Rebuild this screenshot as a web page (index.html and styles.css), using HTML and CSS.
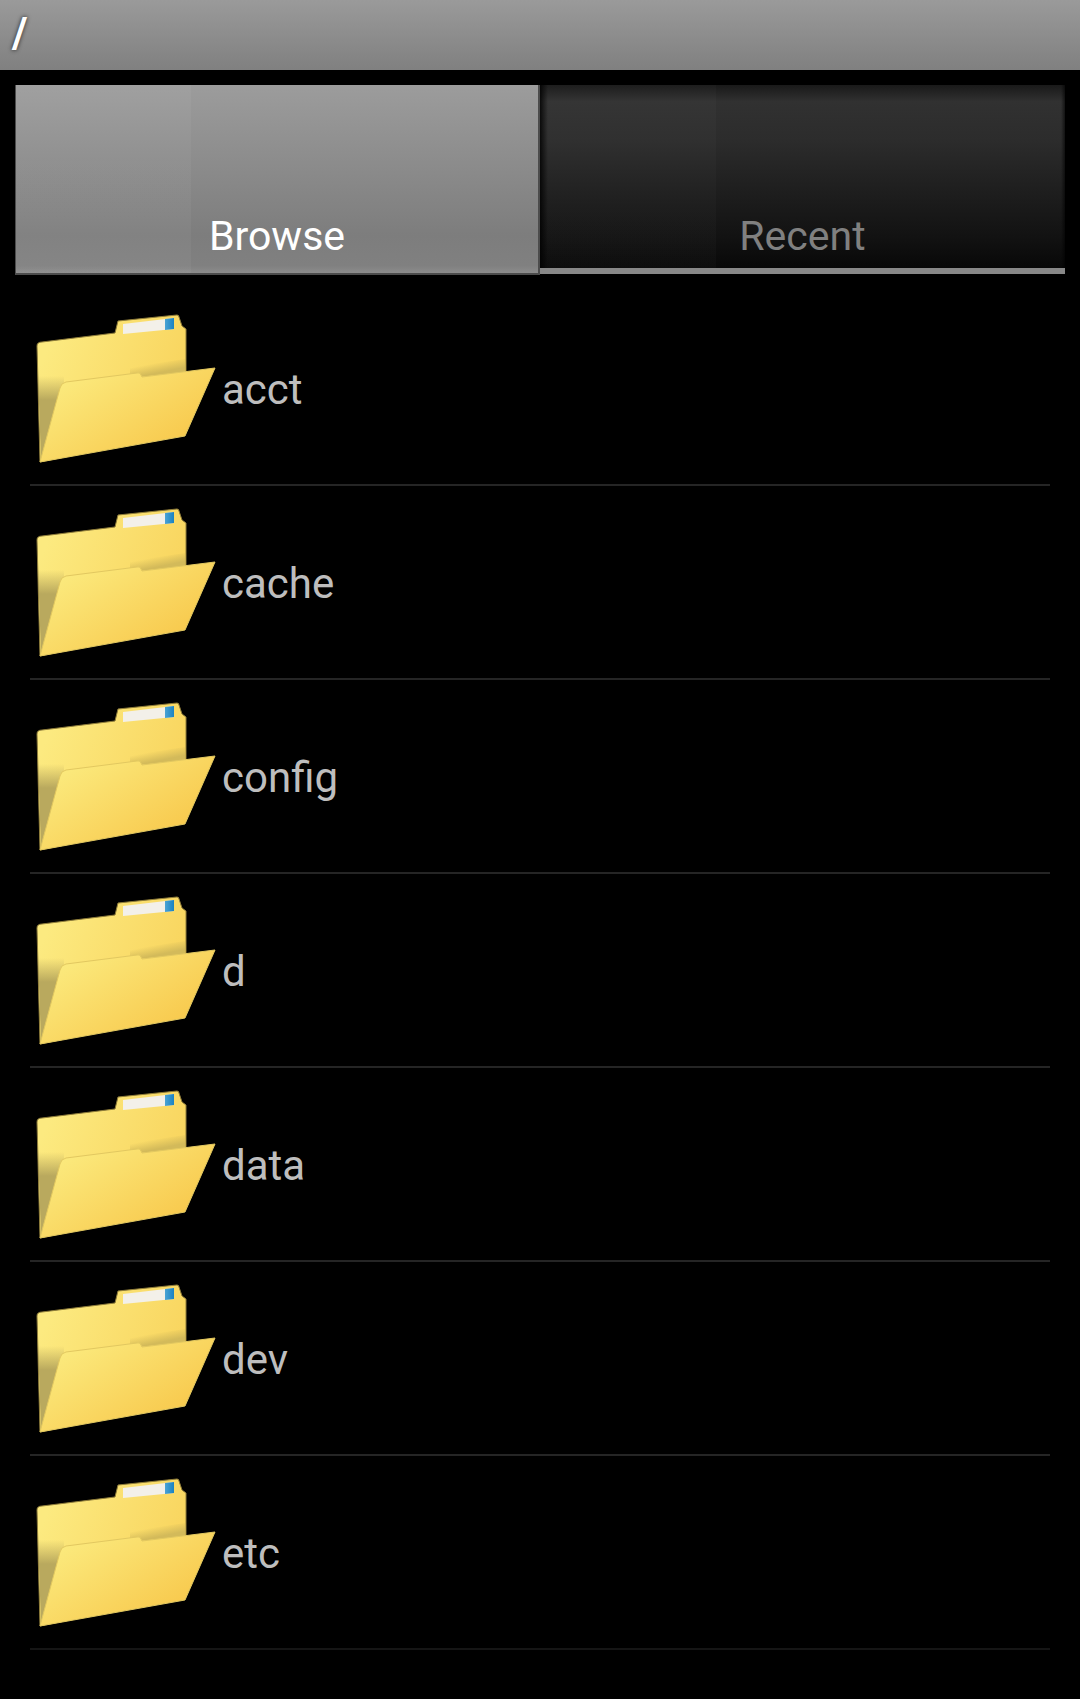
FILE: index.html
```html
<!DOCTYPE html>
<html lang="en">
<head>
<meta charset="utf-8">
<meta name="viewport" content="width=device-width, initial-scale=1">
<title>/</title>
<link rel="stylesheet" href="styles.css">
</head>
<body>
<svg class="sprite" aria-hidden="true">
  <defs>
    <linearGradient id="back" gradientUnits="userSpaceOnUse" x1="20" y1="50" x2="160" y2="110">
      <stop offset="0" stop-color="#fcea80"/>
      <stop offset="1" stop-color="#f8d25a"/>
    </linearGradient>
    <linearGradient id="shade" gradientUnits="userSpaceOnUse" x1="0" y1="84" x2="0" y2="108">
      <stop offset="0" stop-color="#b9a95e" stop-opacity="0"/>
      <stop offset="1" stop-color="#b9a95e"/>
    </linearGradient>
    <linearGradient id="lip" gradientUnits="userSpaceOnUse" x1="130" y1="70" x2="132" y2="80">
      <stop offset="0" stop-color="#d3ba5a" stop-opacity="0"/>
      <stop offset="1" stop-color="#d3ba5a"/>
    </linearGradient>
    <linearGradient id="front" gradientUnits="userSpaceOnUse" x1="50" y1="80" x2="110" y2="170">
      <stop offset="0" stop-color="#fbe97c"/>
      <stop offset="1" stop-color="#f8cb50"/>
    </linearGradient>
    <linearGradient id="label" x1="0" y1="0" x2="1" y2="0">
      <stop offset="0" stop-color="#4aa3d4"/>
      <stop offset="1" stop-color="#1a82c2"/>
    </linearGradient>
  </defs>
  <symbol id="folder" viewBox="0 0 192 192">
    <path fill="url(#back)" stroke="#8f7d3a" stroke-width="1" stroke-linejoin="round" d="M7 54Q7 50 12 50L85 41L88 29L147 23Q149 23 149 25L152 34L156 37V79L110 150L10 170Z"/>
    <path fill="#f3f0e9" d="M93 32L144 26V37L93 42Z"/>
    <path fill="url(#label)" d="M135 27L144 26V37L135 38Z"/>
    <path fill="url(#shade)" d="M8 84L34 84L34 100L11 168Z"/>
    <path fill="url(#lip)" d="M100 75L155 67V80L100 86Z"/>
    <path fill="url(#front)" stroke="#e2c860" stroke-width="1" stroke-linejoin="round" d="M10 170L30 96Q31 91 36 90L107 81Q110 80 111 83L112 85L185 76L155 144Z"/>
  </symbol>
</svg>
<header class="title-bar"><h1 class="path">/</h1></header>
<main class="content">
  <div class="tabs" role="tablist">
    <button class="tab tab-selected" type="button" role="tab" aria-selected="true">Browse</button>
    <button class="tab tab-idle" type="button" role="tab" aria-selected="false">Recent</button>
  </div>
  <ul class="files">
    <li><a class="file" href="#acct"><svg class="icon" aria-hidden="true"><use href="#folder"/></svg><span class="name">acct</span></a></li>
    <li><a class="file" href="#cache"><svg class="icon" aria-hidden="true"><use href="#folder"/></svg><span class="name">cache</span></a></li>
    <li><a class="file" href="#config"><svg class="icon" aria-hidden="true"><use href="#folder"/></svg><span class="name">config</span></a></li>
    <li><a class="file" href="#d"><svg class="icon" aria-hidden="true"><use href="#folder"/></svg><span class="name">d</span></a></li>
    <li><a class="file" href="#data"><svg class="icon" aria-hidden="true"><use href="#folder"/></svg><span class="name">data</span></a></li>
    <li><a class="file" href="#dev"><svg class="icon" aria-hidden="true"><use href="#folder"/></svg><span class="name">dev</span></a></li>
    <li><a class="file" href="#etc"><svg class="icon" aria-hidden="true"><use href="#folder"/></svg><span class="name">etc</span></a></li>
  </ul>
</main>
</body>
</html>
```
FILE: styles.css
```css
* {
  box-sizing: border-box;
}

body {
  margin: 0;
  min-height: 100vh;
  background: #000;
  color: #bebebe;
  font: 42px/50px Roboto, "Liberation Sans", sans-serif;
}

/* Kept rendered, at no size, so that the icon's gradients stay usable. */
.sprite {
  position: absolute;
  width: 0;
  height: 0;
}

.title-bar {
  padding: 8px 12px 12px;
  background: linear-gradient(#9a9a9a, #808080);
}

.path {
  margin: 0;
  color: #fff;
  font-size: 42px;
  font-weight: 700;
  text-shadow: 0 0 4px rgb(0 0 0 / 80%);
}

.content {
  padding: 15px;
}

.tabs {
  display: grid;
  grid-template-columns: 1fr 1fr;
}

.tab {
  height: 190px;
  margin: 0;
  padding: 126px 0 0;
  border: 0;
  font: inherit;
  font-size: 41px;
  text-align: center;
}

.tab-selected {
  border: solid #4c4c4c;
  border-width: 0 2px 2px 1px;
  padding-bottom: 12px;
  background:
    linear-gradient(90deg, rgb(255 255 255 / 4%) 175px, transparent 175px),
    linear-gradient(#9c9c9c, #7d7d7d 80%, #808080 96%, #8c8c8c);
  color: #fff;
}

.tab-idle {
  height: 189px;
  border-bottom: 6px solid #888;
  padding-bottom: 7px;
  background:
    linear-gradient(90deg, #000c, #0006 4px, transparent 8px, transparent calc(100% - 4px), #0009),
    linear-gradient(90deg, rgb(255 255 255 / 2%) 176px, transparent 176px),
    linear-gradient(#191919, #313131 9%, #2c2c2c 30%, #111 85%, #080808);
  color: #808080;
}

.files {
  margin: 0;
  padding: 17px 15px 0;
  list-style: none;
}

.files li {
  border-bottom: 2px solid #252525;
}

.files li:last-child {
  border-color: #151515;
}

.file {
  display: flex;
  align-items: center;
  color: inherit;
  text-decoration: none;
}

.icon {
  flex: none;
  width: 192px;
  height: 192px;
}

.name {
  padding-top: 4px;
}
```
